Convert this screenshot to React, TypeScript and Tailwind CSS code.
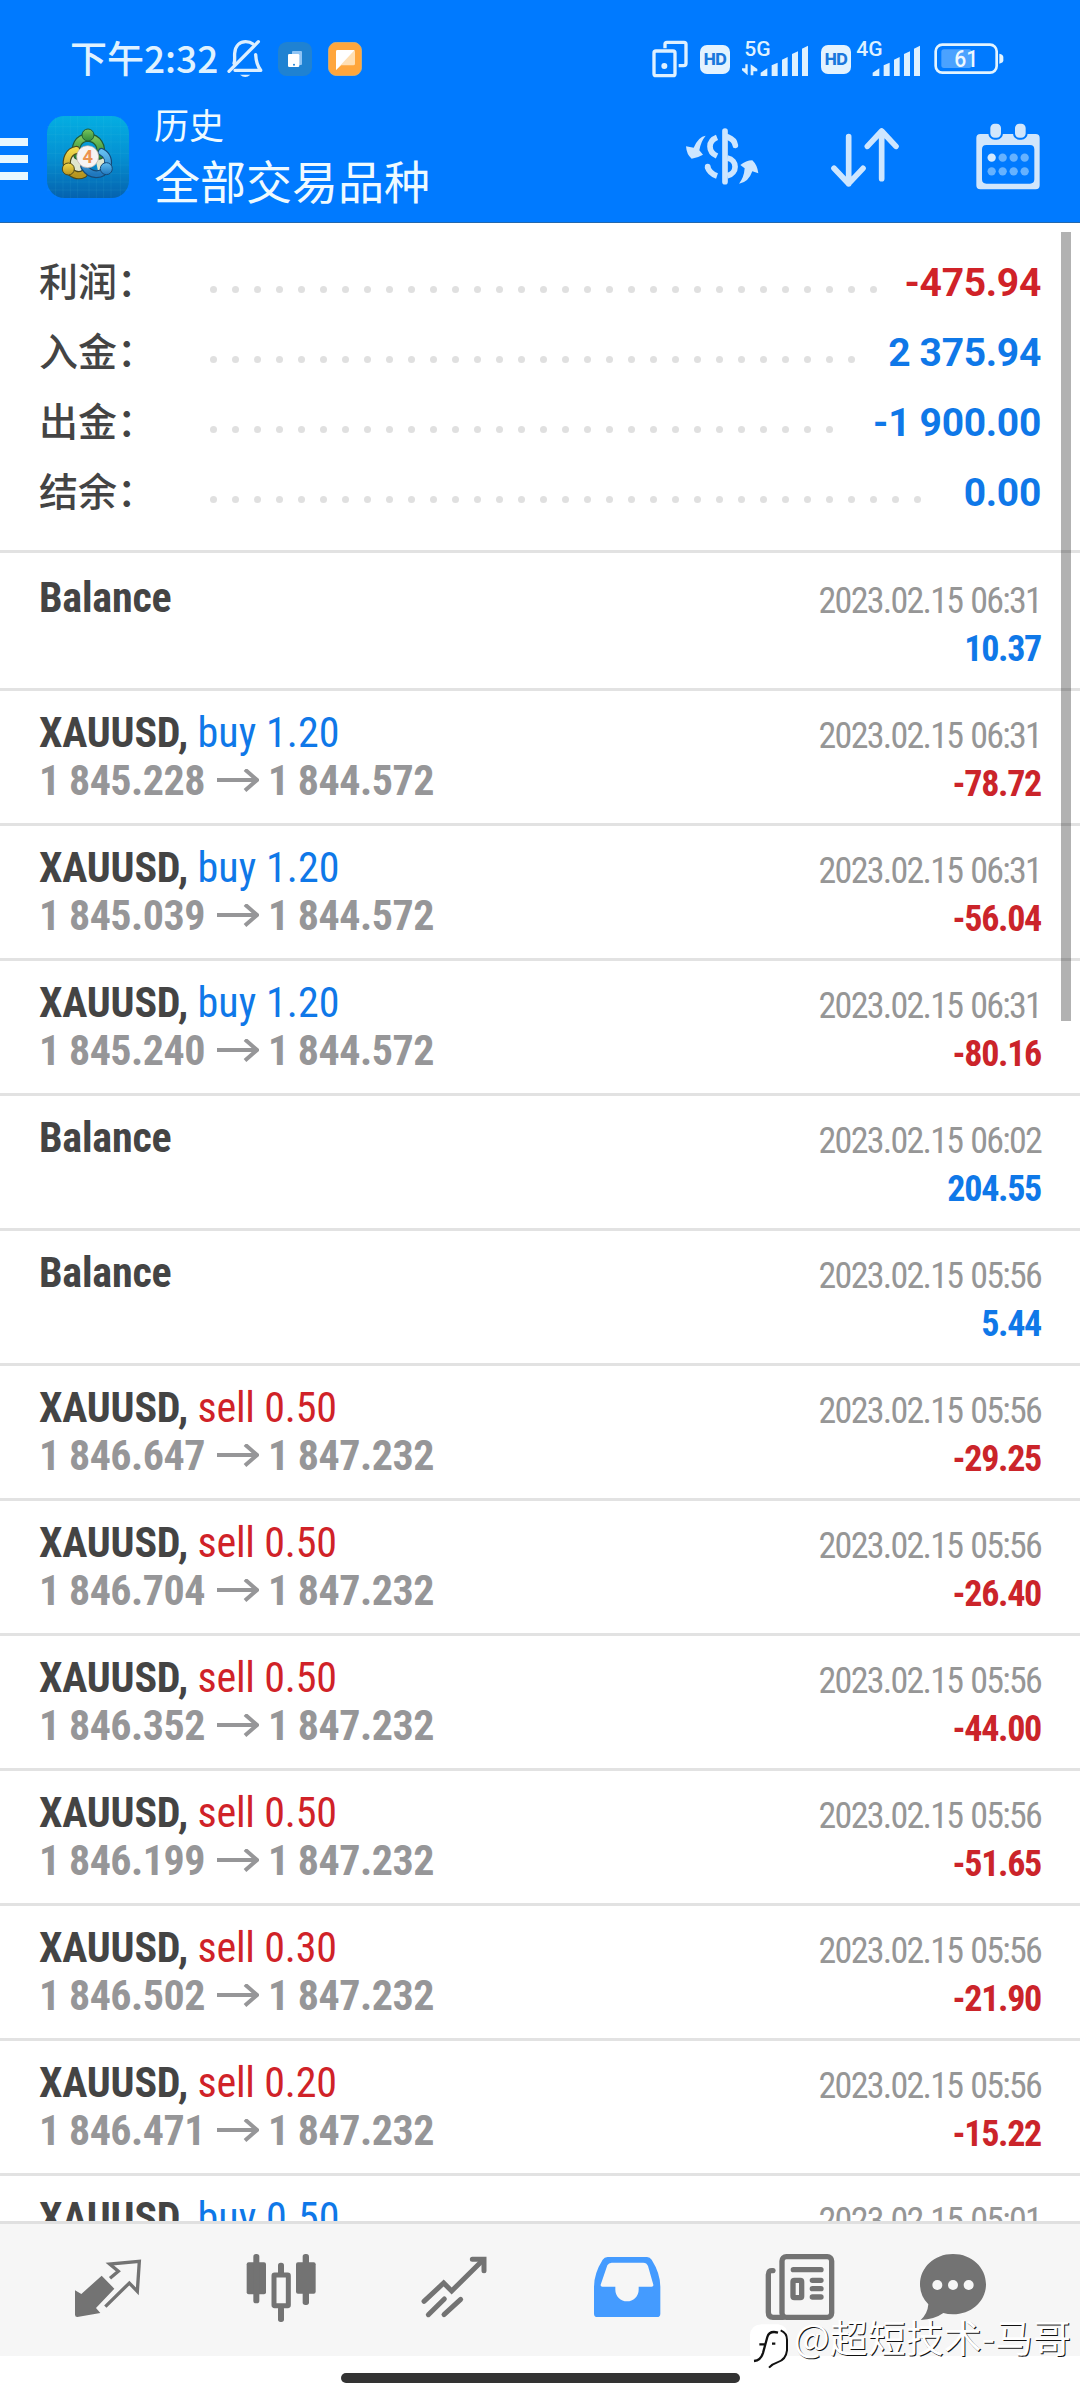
import React from "react";
import { clsx } from "clsx";

interface Deal {
  symbol?: string;
  side?: "buy" | "sell";
  volume?: string;
  open?: string;
  close?: string;
  time: string;
  profit: string;
}

const totals = [
  { label: "利润：", value: "-475.94", dots: 31, negative: true },
  { label: "入金：", value: "2 375.94", dots: 30 },
  { label: "出金：", value: "-1 900.00", dots: 29 },
  { label: "结余：", value: "0.00", dots: 33 },
];

const deals: Deal[] = [
  { time: "2023.02.15 06:31", profit: "10.37" },
  { symbol: "XAUUSD", side: "buy", volume: "1.20", open: "1 845.228", close: "1 844.572", time: "2023.02.15 06:31", profit: "-78.72" },
  { symbol: "XAUUSD", side: "buy", volume: "1.20", open: "1 845.039", close: "1 844.572", time: "2023.02.15 06:31", profit: "-56.04" },
  { symbol: "XAUUSD", side: "buy", volume: "1.20", open: "1 845.240", close: "1 844.572", time: "2023.02.15 06:31", profit: "-80.16" },
  { time: "2023.02.15 06:02", profit: "204.55" },
  { time: "2023.02.15 05:56", profit: "5.44" },
  { symbol: "XAUUSD", side: "sell", volume: "0.50", open: "1 846.647", close: "1 847.232", time: "2023.02.15 05:56", profit: "-29.25" },
  { symbol: "XAUUSD", side: "sell", volume: "0.50", open: "1 846.704", close: "1 847.232", time: "2023.02.15 05:56", profit: "-26.40" },
  { symbol: "XAUUSD", side: "sell", volume: "0.50", open: "1 846.352", close: "1 847.232", time: "2023.02.15 05:56", profit: "-44.00" },
  { symbol: "XAUUSD", side: "sell", volume: "0.50", open: "1 846.199", close: "1 847.232", time: "2023.02.15 05:56", profit: "-51.65" },
  { symbol: "XAUUSD", side: "sell", volume: "0.30", open: "1 846.502", close: "1 847.232", time: "2023.02.15 05:56", profit: "-21.90" },
  { symbol: "XAUUSD", side: "sell", volume: "0.20", open: "1 846.471", close: "1 847.232", time: "2023.02.15 05:56", profit: "-15.22" },
  { symbol: "XAUUSD", side: "buy", volume: "0.50", time: "2023.02.15 05:01", profit: "" },
];

function BellOff() {
  return (
    <svg className="h-[40px] w-[36px]" viewBox="682 29 108 120" fill="none" stroke="#dcefff" strokeWidth="10" strokeLinecap="round" strokeLinejoin="round">
      <path d="M688 126 776 37" />
      <path d="M703 102C707 92 704 84 705 72C707 48 722 37 738 37C748 37 755 40 760 44" />
      <path d="M768 76C769 98 772 108 783 123H706" />
      <path d="M721 136H752Q737 150 721 136Z" fill="#dcefff" stroke="none" />
    </svg>
  );
}

function Windows() {
  return (
    <svg className="h-[38px] w-[36px]" viewBox="34 30 108 114" fill="none" stroke="#dff1ff" strokeWidth="10">
      <rect x="40" y="63" width="63" height="74" rx="6" />
      <path d="M73 55V43Q73 37 79 37H130Q136 37 136 43V100Q136 107 129 107H114" />
      <circle cx="71" cy="108" r="9" fill="#dff1ff" stroke="none" />
    </svg>
  );
}

function HdBadge() {
  return (
    <span className="flex h-[29px] w-[30px] items-center justify-center rounded-[7px] bg-[#e3f3ff] font-['Inter',sans-serif] text-[16px] font-extrabold leading-none tracking-[-0.5px] text-[#1a78dc]">
      HD
    </span>
  );
}

function Signal({ label, data }: { label: string; data?: boolean }) {
  return (
    <svg className="h-[38px] w-[67px] overflow-visible" viewBox="308 26 201 114" fill="#def1ff">
      <text x="315" y="75" fontSize="60" fontWeight="500" fontFamily="Roboto, sans-serif" textLength="79" lengthAdjust="spacingAndGlyphs">
        {label}
      </text>
      {data && <path d="M318 99h7v33l-17-15v-6h10zM334 132V99l20 14v7h-12v12z" />}
      <path d="M364 134v-10l20-13v23zM397 134V102l18-8v40zM428 134V85l17-8v57zM458 134V68l18-8v74zM488 134V52l18-9v91z" />
    </svg>
  );
}

function Battery() {
  return (
    <svg className="h-[32px] w-[70px] overflow-visible" viewBox="884 40 210 96" fill="none">
      <rect x="889" y="45" width="183" height="84" rx="20" stroke="#e3f4ff" strokeWidth="8" />
      <path d="M1080 72q12 2 12 10v10q0 8-12 10z" fill="#e3f4ff" />
      <rect x="906" y="59" width="91" height="56" rx="8" fill="#4ba2ff" />
      <text x="945" y="113" fontSize="71" fontWeight="500" fontFamily="Roboto, sans-serif" fill="#eef8ff" textLength="72" lengthAdjust="spacingAndGlyphs">
        61
      </text>
    </svg>
  );
}

function AppLogo() {
  return (
    <svg className="ml-[19px] h-[82px] w-[82px]" viewBox="142 258 246 246">
      <defs>
        <linearGradient id="logoBg" x1="0" y1="0" x2="0" y2="1">
          <stop offset="0" stopColor="#04aee2" />
          <stop offset="0.5" stopColor="#0590d2" />
          <stop offset="1" stopColor="#0562ae" />
        </linearGradient>
        <linearGradient id="logoGreen" x1="0" y1="0" x2="0" y2="1">
          <stop offset="0" stopColor="#7cc65c" />
          <stop offset="1" stopColor="#2f8b3b" />
        </linearGradient>
        <linearGradient id="logoGold" x1="0" y1="0" x2="0" y2="1">
          <stop offset="0" stopColor="#f1d94c" />
          <stop offset="1" stopColor="#b7951f" />
        </linearGradient>
        <linearGradient id="logoBlue" x1="0" y1="0" x2="0" y2="1">
          <stop offset="0" stopColor="#63bdf0" />
          <stop offset="1" stopColor="#1f77bd" />
        </linearGradient>
      </defs>
      <rect x="142" y="258" width="246" height="246" rx="52" fill="url(#logoBg)" />
      <path d="M168 262v238M190 258v246M212 258v246M234 258v246M268 258v246M290 258v246M312 258v246M334 258v246M362 262v238M142 290h246M142 313h246M142 336h246M142 370h246M142 405h246M142 430h246M142 456h246M142 480h246" stroke="#5fd0ee" strokeOpacity="0.14" strokeWidth="2" />
      <path d="M222 372 204 410 240 440 250 402zM290 398l8 40 30-24-22-44z" fill="#dfe6cf" />
      <g fill="none" strokeLinecap="round">
        <path d="M234 376C222 350 236 324 265 322C294 324 310 350 300 376" stroke="#1f5a36" strokeWidth="26" />
        <path d="M234 376C222 350 236 324 265 322C294 324 310 350 300 376" stroke="url(#logoGreen)" strokeWidth="19" />
        <path d="M230 360C208 364 196 388 204 414C214 434 236 440 252 432" stroke="#4d4a1c" strokeWidth="25" />
        <path d="M230 360C208 364 196 388 204 414C214 434 236 440 252 432" stroke="url(#logoGold)" strokeWidth="18" />
        <path d="M306 366C322 374 330 392 322 412C308 440 272 440 254 410" stroke="#164a78" strokeWidth="24" />
        <path d="M306 366C322 374 330 392 322 412C308 440 272 440 254 410" stroke="url(#logoBlue)" strokeWidth="17" />
      </g>
      <circle cx="265" cy="315" r="18" fill="url(#logoGreen)" stroke="#1f5a36" strokeWidth="3" />
      <circle cx="206" cy="417" r="18" fill="url(#logoGold)" stroke="#4d4a1c" strokeWidth="3" />
      <circle cx="320" cy="416" r="18" fill="url(#logoBlue)" stroke="#164a78" strokeWidth="3" />
      <circle cx="264" cy="380" r="33" fill="#f7f4f4" stroke="#b9a9a0" strokeWidth="2" />
      <text x="264" y="399" textAnchor="middle" fontSize="55" fontWeight="700" fontFamily="Roboto, sans-serif" fill="#ec9350">
        4
      </text>
    </svg>
  );
}

function CurrencyIcon() {
  return (
    <svg className="h-[62px] w-[75px]" viewBox="135 285 225 186" fill="none" stroke="#cde6ff" strokeWidth="17">
      <path d="M255 300V452" strokeLinecap="round" />
      <path d="M263 318Q284 326 286 343" strokeLinecap="round" />
      <path d="M231 319C203 330 203 362 231 375" />
      <path d="M262 381C293 387 293 427 262 434" />
      <path d="M202 407Q208 427 231 435" />
      <circle cx="203" cy="407" r="8.500" fill="#cde6ff" stroke="none" />
      <path d="M197 314Q176 316 161 350L138 346Q140 372 155 383Q172 381 189 371L178 358Q182 332 197 314Z" fill="#cde6ff" stroke="none" />
      <path d="M297 458Q312 440 314 412L301 402Q318 388 337 388Q352 402 355 427L337 421Q325 455 297 458Z" fill="#cde6ff" stroke="none" />
    </svg>
  );
}

function SortIcon() {
  return (
    <svg className="h-[62px] w-[70px]" viewBox="570 285 210 186" fill="none" stroke="#cde6ff" strokeWidth="17" strokeLinecap="round" strokeLinejoin="round">
      <path d="M626 317V458M582 412 626 458 669 412" />
      <path d="M725 443V302M682 346 725 300 768 346" />
    </svg>
  );
}

function CalendarIcon() {
  return (
    <svg className="h-[68px] w-[64px]" viewBox="1009 276 192 204" fill="#d2e6fb">
      <path fillRule="evenodd" d="M1022 309H1188Q1200 309 1200 321V463Q1200 475 1188 475H1022Q1010 475 1010 463V321Q1010 309 1022 309ZM1040 342Q1027 342 1027 355V445Q1027 458 1040 458H1171Q1184 458 1184 445V355Q1184 342 1171 342Z" />
      <rect x="1049" y="275" width="38" height="48" rx="16" stroke="#007aff" strokeWidth="6" />
      <rect x="1123" y="275" width="38" height="48" rx="16" stroke="#007aff" strokeWidth="6" />
      {[1056, 1089, 1122, 1155].map((cx, i) => (
        <g key={cx} fill="#66b2ff">
          <circle cx={cx} cy="380" r="12.500" fill={i === 0 ? "#d5eaff" : "#66b2ff"} />
          <circle cx={cx} cy="421" r="12.500" />
        </g>
      ))}
    </svg>
  );
}

function Header() {
  return (
    <header className="flex h-[223px] shrink-0 flex-col border-b border-[#2468ad] bg-[#007aff] text-[#effaff]">
      <div className="mt-[37px] flex h-[44px] items-center justify-between pl-[70px] pr-[76px]">
        <div className="flex items-center">
          <span className="-mt-[5px] w-[157px] whitespace-nowrap font-['Noto_Sans_CJK_SC',sans-serif] text-[37px] font-medium leading-[44px] text-[#dff2ff]">
            下午2:32
          </span>
          <BellOff />
          <svg className="ml-[15px] size-[34px]" viewBox="0 0 102 102">
            <rect width="102" height="102" rx="26" fill="#1f82d2" />
            <rect x="42" y="27" width="30" height="42" rx="3" fill="#8fc4f4" />
            <rect x="30" y="36" width="34" height="39" rx="4" fill="#fff" />
            <circle cx="48" cy="68" r="3" fill="#1f82d2" />
          </svg>
          <svg className="ml-[16px] size-[34px]" viewBox="0 0 102 102">
            <rect x="1" y="1" width="100" height="100" rx="25" fill="#ffa63c" stroke="#d9b878" strokeWidth="2" />
            <path d="M28 24h48q5 0 5 5v36q0 5-5 5H40L24 84V29q0-5 4-5z" fill="#ffdfb3" />
            <path d="M28 24h52L24 84V29q0-5 4-5z" fill="#fff" />
          </svg>
        </div>
        <div className="flex items-center">
          <Windows />
          <span className="ml-[12px]"><HdBadge /></span>
          <span className="ml-[12px]"><Signal label="5G" data /></span>
          <span className="ml-[12px]"><HdBadge /></span>
          <span className="ml-[3px]"><Signal label="4G" /></span>
          <span className="ml-[13px]"><Battery /></span>
        </div>
      </div>
      <div className="flex h-[141px] items-center pt-[11px]">
        <div className="mt-[4px] flex flex-col gap-[9px]">
          <span className="h-[8px] w-[28px] bg-[#e8f8ff]" />
          <span className="h-[8px] w-[28px] bg-[#e8f8ff]" />
          <span className="h-[8px] w-[28px] bg-[#e8f8ff]" />
        </div>
        <AppLogo />
        <div className="-mt-[10px] ml-[25px] flex flex-1 flex-col whitespace-nowrap font-['Noto_Sans_CJK_SC',sans-serif]">
          <span className="text-[35px] leading-[53px]">历史</span>
          <span className="text-[46px] leading-[58px]">全部交易品种</span>
        </div>
        <CurrencyIcon />
        <span className="ml-[70px]"><SortIcon /></span>
        <span className="ml-[76px] mr-[40px]"><CalendarIcon /></span>
      </div>
    </header>
  );
}

function Summary() {
  return (
    <section className="h-[330px] border-b-3 border-[#e2e2e2] pl-[39px] pr-[39px] pt-[24px]">
      {totals.map((row) => (
        <div key={row.label} className="flex h-[70px] items-center">
          <span className="-mt-[6px] w-[171px] font-['Noto_Sans_CJK_SC',sans-serif] text-[39px] font-medium leading-[64px] text-[#444]">
            {row.label}
          </span>
          <div className="mt-[15px] flex gap-[15px]">
            {Array.from({ length: row.dots }, (_, i) => (
              <i key={i} className="size-[7px] rounded-full bg-[#e0e0e0]" />
            ))}
          </div>
          <span className={clsx("ml-auto mt-[2px] font-['Roboto',sans-serif] text-[39px] font-bold tracking-[-0.3px]", row.negative ? "text-[#d02228]" : "text-[#0f78e8]")}>
            {row.value}
          </span>
        </div>
      ))}
    </section>
  );
}

function DealRow({ deal }: { deal: Deal }) {
  return (
    <li className="flex h-[135px] shrink-0 justify-between border-b-3 border-[#e2e2e2] px-[39px] font-['Roboto_Condensed','Roboto',sans-serif] font-stretch-75%">
      <div className="pt-[18px] text-[42px] leading-[48px]">
        <div className="font-bold tracking-[-0.2px] text-[#444]">
          {deal.symbol ? `${deal.symbol}, ` : "Balance"}
          {deal.side && (
            <span className={clsx("font-normal", deal.side === "buy" ? "tracking-[0.1px] text-[#0f78e8]" : "tracking-[-0.2px] text-[#d02228]")}>
              {deal.side} {deal.volume}
            </span>
          )}
        </div>
        {deal.open && (
          <div className="flex items-center font-bold tracking-[-0.5px] text-[#969698]">
            {deal.open}
            <svg className="ml-[12px] mr-[9px] h-[24px] w-[42px]" viewBox="0 0 42 24" fill="none" stroke="currentColor" strokeWidth="4">
              <path d="M0 11H40M28 0.500 40 11 28 21.500" />
            </svg>
            {deal.close}
          </div>
        )}
      </div>
      <div className="pt-[21px] text-right text-[36px] leading-[48px]">
        <div className="tracking-[-1.75px] text-[#969696] [word-spacing:1.5px]">{deal.time}</div>
        <div className={clsx("font-bold tracking-[-1.3px]", deal.profit.startsWith("-") ? "text-[#cb242a]" : "text-[#0f78e8]")}>{deal.profit}</div>
      </div>
    </li>
  );
}

function TabIcon({ x, children }: { x: number; children: React.ReactNode }) {
  return (
    <svg className="size-[80px]" viewBox={`${x - 120} 24 240 240`} fill="#737373">
      {children}
    </svg>
  );
}

function TabBar() {
  return (
    <nav className="flex h-[135px] shrink-0 border-t-3 border-[#e0e0e0] bg-[#f6f6f6] pl-[21px] pt-[24px]">
      <div className="flex w-[173px] justify-center">
        <TabIcon x={146}>
          <path d="M127 107 165 146 110 204 123 219 54 231Q47 231 47 224V151L66 162Z" strokeLinejoin="round" />
          <path d="M152 115 177 94 151 72 240 64 234 154 210 129 138 200" fill="none" stroke="#737373" strokeWidth="10" />
        </TabIcon>
      </div>
      <div className="flex w-[173px] justify-center">
        <TabIcon x={663}>
          <rect x="560" y="67" width="58" height="96" rx="6" />
          <rect x="580" y="42" width="18" height="148" rx="8" />
          <rect x="708" y="67" width="59" height="94" rx="6" />
          <rect x="728" y="42" width="19" height="153" rx="8" />
          <rect x="654" y="68" width="18" height="40" rx="8" />
          <rect x="654" y="198" width="18" height="48" rx="8" />
          <rect x="642" y="105" width="43" height="92" rx="2" fill="#f6f6f6" stroke="#737373" strokeWidth="15" />
        </TabIcon>
      </div>
      <div className="flex w-[173px] justify-center">
        <TabIcon x={1183}>
          <g fill="none" stroke="#737373" strokeWidth="15" strokeLinecap="round">
            <path d="M1093 184 1152 129 1176 153 1270 60" strokeLinejoin="miter" />
            <path d="M1238 58H1273V92" />
            <path d="M1106 224 1154 177M1153 224 1203 178" />
          </g>
        </TabIcon>
      </div>
      <div className="flex w-[173px] justify-center">
        <TabIcon x={142}>
          <path fill="#449bff" fillRule="evenodd" d="M84 51H202Q211 51 216 59Q242 100 242 140V221Q242 231 232 231H53Q43 231 43 221V140Q43 100 69 59Q74 51 84 51ZM96 68Q87 68 83 76L63 134Q62 140 68 140H107V149A35 35 0 0 0 177 149V140H216Q222 140 221 134L205 78Q201 68 191 68Z" />
        </TabIcon>
      </div>
      <div className="flex w-[174px] justify-center">
        <TabIcon x={663}>
          <g fill="none" stroke="#737373" strokeWidth="16" strokeLinecap="round">
            <rect x="609" y="50" width="149" height="182" rx="13" />
            <path d="M582 92Q568 90 568 104V217Q568 232 582 232H612" />
            <path d="M643 89H726M700 121H726M700 146H726M700 171H726" />
            <rect x="642" y="121" width="26" height="52" rx="4" />
          </g>
        </TabIcon>
      </div>
      <div className="flex w-[132px] justify-center">
        <TabIcon x={1119}>
          <path d="M1119 42C1176 42 1218 83 1218 133C1218 184 1174 223 1119 223Q1103 223 1090 219Q1064 238 1022 240Q1043 221 1045 193Q1020 168 1020 133C1020 83 1062 42 1119 42Z" />
          <circle cx="1072" cy="135" r="15" fill="#f6f6f6" />
          <circle cx="1119" cy="135" r="15" fill="#f6f6f6" />
          <circle cx="1166" cy="135" r="15" fill="#f6f6f6" />
        </TabIcon>
      </div>
    </nav>
  );
}

function Watermark() {
  return (
    <div className="absolute right-[9px] top-[2303px] flex items-center gap-[6px]">
      <svg className="mt-[20px] h-[46px] w-[38px]" viewBox="508 236 114 138">
        <path d="M542 240H592Q622 244 622 276V318Q618 350 590 356Q576 360 564 372L561 356H542Q508 354 508 320V272Q510 242 542 240Z" fill="#fff" />
        <path d="M600 258Q619 266 619 286V318Q616 346 590 354Q576 358 565 370" fill="none" stroke="#111" strokeWidth="6" />
        <path d="M592 265Q566 258 560 278L547 326Q540 348 520 350M536 300H554M574 298H584" fill="none" stroke="#111" strokeWidth="7" />
      </svg>
      <span className="whitespace-nowrap font-['Noto_Sans_CJK_SC',sans-serif] text-[38px] font-normal leading-[52px] text-white [text-shadow:1px_1px_0_#111]">
        @超短技术-马哥
      </span>
    </div>
  );
}

export default function App() {
  return (
    <div className="relative flex h-[2400px] w-[1080px] flex-col overflow-hidden bg-white">
      <Header />
      <main className="relative flex-1 overflow-hidden">
        <Summary />
        <ul className="flex flex-col pt-[3px]">
          {deals.map((deal, i) => (
            <DealRow key={i} deal={deal} />
          ))}
        </ul>
        <div className="absolute right-[9px] top-[9px] h-[789px] w-[10px] bg-black/30" />
      </main>
      <TabBar />
      <div className="flex h-[44px] shrink-0 justify-center pt-[17px]">
        <div className="h-[10px] w-[399px] rounded-full bg-[#333]" />
      </div>
      <Watermark />
    </div>
  );
}
